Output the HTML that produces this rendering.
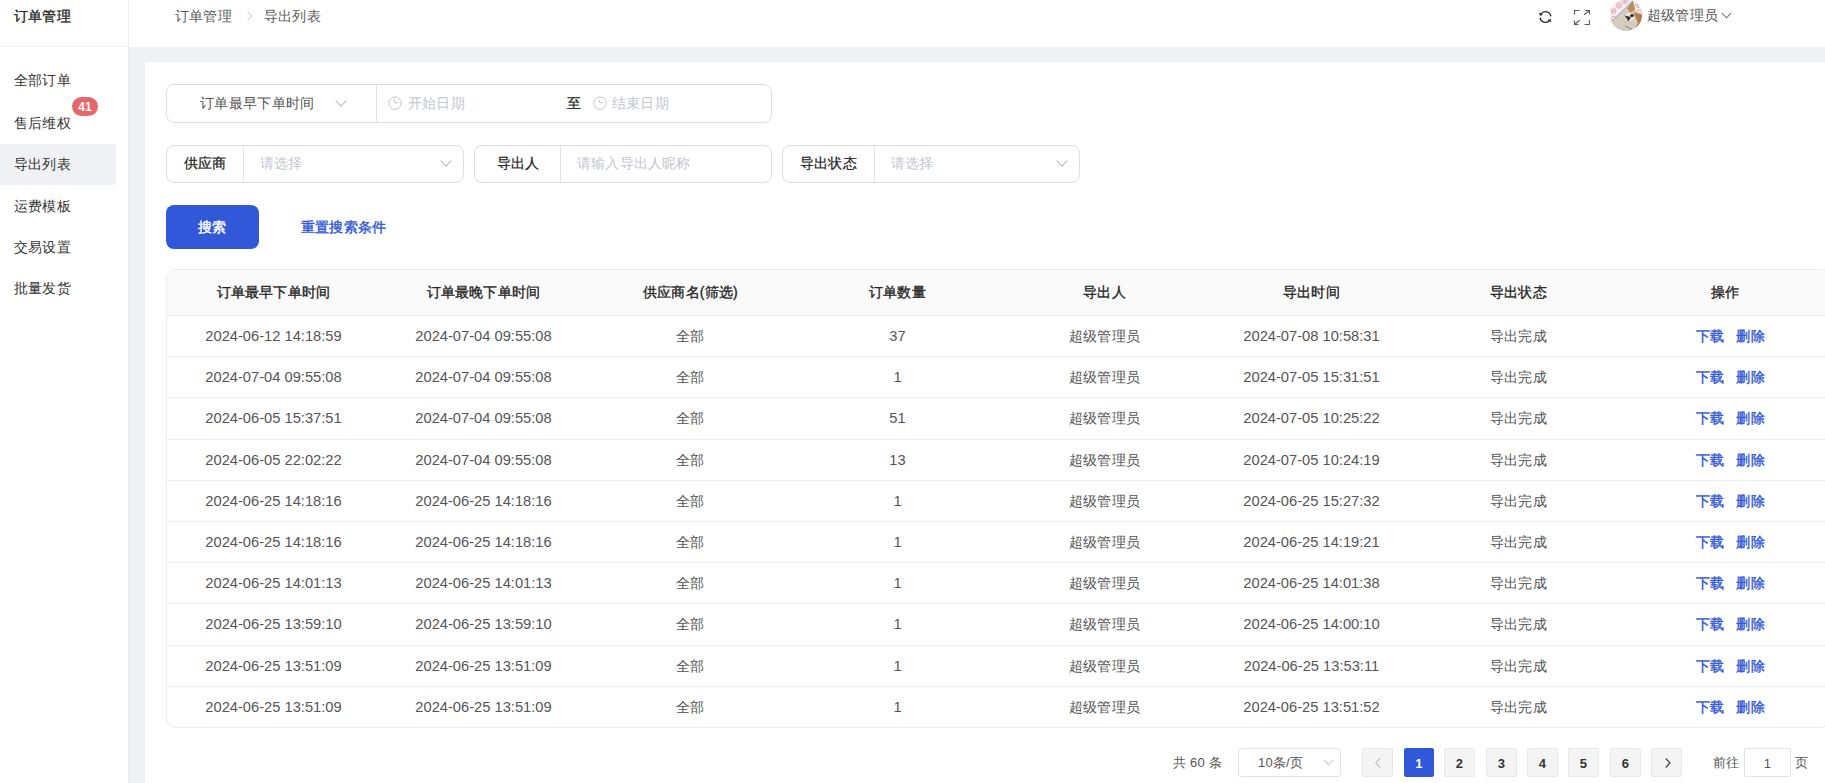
<!DOCTYPE html>
<html><head><meta charset="utf-8">
<style>
*{box-sizing:border-box;margin:0;padding:0}
html,body{width:1825px;height:783px;overflow:hidden}
body{position:relative;background:#f0f1f5;font-family:"Liberation Sans",sans-serif;font-size:14px;color:#333;letter-spacing:0.2px}
.abs{position:absolute}
#side{left:0;top:0;width:129px;height:783px;background:#fff;border-right:1px solid #eeeff3}
#side .ttl{position:absolute;left:0;top:0;width:128px;height:47px;border-bottom:1px solid #eeeff3;font-weight:400;-webkit-text-stroke:0.3px #222;color:#222;padding-left:14px;line-height:32px}
#side .mi{position:absolute;left:0;width:116px;height:41px;line-height:41px;padding-left:14px;color:#333}
#side .mi.act{background:#f0f1f4;border-radius:0 3px 3px 0}
.badge{position:absolute;left:72px;top:97px;width:26px;height:19px;border-radius:10px;background:#e6676a;color:#fff;font-size:12px;font-weight:bold;text-align:center;line-height:21px;letter-spacing:0}
#hdr{left:129px;top:0;width:1696px;height:47px;background:#fff}
.bc{position:absolute;top:0;line-height:32px;color:#5c5c5c}
#card{left:145px;top:62px;width:1700px;height:760px;background:#fff;border-radius:2px}
.grp{position:absolute;border:1px solid #dddde6;border-radius:8px;height:38px;background:#fff}
.grp .div{position:absolute;top:0;bottom:0;width:1px;background:#e2e2ea}
.t{position:absolute;white-space:nowrap;line-height:16px}
.ph{color:#c4c6d1}
.lbl{color:#1f1f1f;-webkit-text-stroke:0.25px #1f1f1f}
.chev{position:absolute;width:8px;height:8px;border-right:1px solid #b8b8c4;border-bottom:1px solid #b8b8c4;transform:rotate(45deg)}
.btn{left:166px;top:205px;width:93px;height:44px;background:#3158d8;border-radius:8px;color:#fff;font-weight:400;-webkit-text-stroke:0.4px #fff;text-align:center;line-height:44px}
.link{color:#3158d8;font-weight:400;-webkit-text-stroke:0.4px #3158d8}
table{position:absolute;left:166px;top:269px;width:1664px;table-layout:fixed;border-collapse:separate;border-spacing:0;border:1px solid #ebebf0;border-radius:10px;overflow:hidden}
th{height:46px;background:#fafafa;font-weight:bold;color:#262626;border-bottom:1px solid #ebebf0;text-align:center;padding:0}
td{height:41.2px;border-bottom:1px solid #ebebf0;color:#555;text-align:center;padding:0}
tr:last-child td{border-bottom:none;height:40.4px}
td.d{font-size:14.7px;letter-spacing:0}
td.op{text-align:left;padding-left:74px}
td:not(.d){padding-top:2px}
th{font-weight:400;-webkit-text-stroke:0.35px #262626}
.pg{position:absolute;overflow:hidden;top:748px;height:29px;width:31px;background:#f4f4f5;border:1px solid #e8e8ec;border-radius:2px;text-align:center;line-height:29px;font-weight:bold;font-size:13px;color:#333}
.pg.on{background:#3158d8;border-color:#3158d8;color:#fff}
</style></head><body>
<div id="side" class="abs">
  <div class="ttl">订单管理</div>
  <div class="mi" style="top:60px">全部订单</div>
  <div class="mi" style="top:103px">售后维权</div>
  <div class="badge">41</div>
  <div class="mi act" style="top:144px">导出列表</div>
  <div class="mi" style="top:186px">运费模板</div>
  <div class="mi" style="top:227px">交易设置</div>
  <div class="mi" style="top:268px">批量发货</div>
</div>
<div id="hdr" class="abs">
  <div class="bc" style="left:46px">订单管理</div>
  <svg class="abs" style="left:117px;top:10px" width="8" height="12" viewBox="0 0 8 12" fill="none" stroke="#c4c4cc" stroke-width="1"><path d="M1.5 1.5 L6 6 L1.5 10.5"/></svg>
  <div class="bc" style="left:135px">导出列表</div>
  <svg class="abs" style="left:1410px;top:10px" width="14" height="14" viewBox="0 0 14 14" fill="none" stroke="#2a2a2a" stroke-width="1.25">
    <path d="M1.9 4.3 A5.5 5.5 0 0 1 11.95 6.3"/><path d="M3.4 4.6 L0.6 3.0 L1.1 5.5 Z" fill="#2a2a2a" stroke-width="0.6"/>
    <path d="M1.0 7.6 A5.5 5.5 0 0 0 10.6 10.5"/><path d="M9.2 9.9 L11.7 11.9 L11.6 9.4 Z" fill="#2a2a2a" stroke-width="0.6"/>
  </svg>
  <svg class="abs" style="left:1444px;top:9px" width="17" height="17" viewBox="0 0 17 17" fill="none" stroke="#5c5c5c" stroke-width="1.2">
    <path d="M1.5 5.5 V1.5 H6.5"/><path d="M12 1.5 H16.5 V5.5"/><path d="M11 5.8 L16.2 1.8"/>
    <path d="M1.5 11.5 V15.5 H5.5"/><path d="M6.8 11.2 L1.8 15.2"/><path d="M16.5 11 V15.5 H11.5"/>
  </svg>
  <div class="abs" style="left:1481px;top:-1px;width:32px;height:32px;border-radius:50%;overflow:hidden;background:#f4ecee">
    <svg width="32" height="32" viewBox="0 0 32 32">
      <g fill="none" stroke="#dba3a6" stroke-width="0.9">
        <circle cx="3.5" cy="12" r="2.4"/><circle cx="9" cy="6.5" r="2.6"/><circle cx="15" cy="2" r="2.4"/>
        <circle cx="4" cy="19.5" r="2.2"/><circle cx="28" cy="6" r="2.4"/><circle cx="29.5" cy="13" r="2.2"/>
      </g>
      <g fill="#e58a90"><circle cx="3.5" cy="12" r="0.9"/><circle cx="9" cy="6.5" r="1"/><circle cx="15" cy="2" r="0.9"/><circle cx="28" cy="6" r="0.9"/></g>
      <path d="M1 23 L23 1.5 L25 11 L32 16 L32 32 L0 32 Z" fill="#d5ccbe"/>
      <path d="M1 23 L23 1.5" stroke="#6a7fc0" stroke-width="0.6"/>
      <path d="M17 9.5 L23 1.5 L25 10.5 L20.5 14 Z" fill="#bb8d63"/>
      <path d="M23.5 13.5 L32 15.5 L32 32 L24 32 L28 24 Z" fill="#b27c4b"/>
      <ellipse cx="19.5" cy="18" rx="4.8" ry="4.2" fill="#ece6dc"/>
      <path d="M14.5 16.5 L21 18 L18.5 22.5 Z" fill="#3e342e"/>
      <ellipse cx="22" cy="16.5" rx="1.7" ry="1.5" fill="#1e1a18"/>
      <path d="M15 27 L22 30.5" stroke="#6a6058" stroke-width="0.7"/>
    </svg>
  </div>
  <div class="bc" style="left:1518px;top:-1px;color:#555">超级管理员</div>
  <div class="chev" style="left:1594px;top:10px;width:7px;height:7px;border-color:#777"></div>
</div>
<div id="card" class="abs"></div>

<!-- filter row 1 -->
<div class="grp" style="left:166px;top:84px;width:606px;height:39px">
  <div class="t" style="left:33px;top:10px;color:#555;letter-spacing:0.35px">订单最早下单时间</div>
  <div class="chev" style="left:170px;top:12px"></div>
  <div class="div" style="left:209px"></div>
  <svg class="abs" style="left:221px;top:11px" width="14" height="14" viewBox="0 0 14 14" fill="none" stroke="#c6c8d3" stroke-width="1"><circle cx="7" cy="7.2" r="6.2"/><path d="M6.6 3.4 V6.6 H10.2"/></svg>
  <div class="t ph" style="left:241px;top:10px">开始日期</div>
  <div class="t lbl" style="left:400px;top:10px">至</div>
  <svg class="abs" style="left:426px;top:11px" width="14" height="14" viewBox="0 0 14 14" fill="none" stroke="#c6c8d3" stroke-width="1"><circle cx="7" cy="7.2" r="6.2"/><path d="M6.6 3.4 V6.6 H10.2"/></svg>
  <div class="t ph" style="left:445px;top:10px">结束日期</div>
</div>
<!-- filter row 2 -->
<div class="grp" style="left:166px;top:145px;width:298px">
  <div class="t lbl" style="left:17px;top:9px">供应商</div>
  <div class="div" style="left:76px"></div>
  <div class="t ph" style="left:93px;top:9px">请选择</div>
  <div class="chev" style="left:275px;top:11px"></div>
</div>
<div class="grp" style="left:474px;top:145px;width:298px">
  <div class="t lbl" style="left:22px;top:9px">导出人</div>
  <div class="div" style="left:85px"></div>
  <div class="t ph" style="left:102px;top:9px">请输入导出人昵称</div>
</div>
<div class="grp" style="left:782px;top:145px;width:298px">
  <div class="t lbl" style="left:17px;top:9px">导出状态</div>
  <div class="div" style="left:91px"></div>
  <div class="t ph" style="left:108px;top:9px">请选择</div>
  <div class="chev" style="left:275px;top:11px"></div>
</div>

<div class="abs btn">搜索</div>
<div class="abs link" style="left:301px;top:218px;line-height:18px">重置搜索条件</div>

<table>
<colgroup><col style="width:213px"><col style="width:207px"><col style="width:207px"><col style="width:207px"><col style="width:207px"><col style="width:207px"><col style="width:207px"><col style="width:207px"></colgroup>
<thead><tr><th>订单最早下单时间</th><th>订单最晚下单时间</th><th>供应商名(筛选)</th><th>订单数量</th><th>导出人</th><th>导出时间</th><th>导出状态</th><th>操作</th></tr></thead>
<tbody>
<tr><td class="d">2024-06-12 14:18:59</td><td class="d">2024-07-04 09:55:08</td><td>全部</td><td class="d">37</td><td>超级管理员</td><td class="d">2024-07-08 10:58:31</td><td>导出完成</td><td class="op"><span class="link">下载</span><span class="link" style="margin-left:12px">删除</span></td></tr>
<tr><td class="d">2024-07-04 09:55:08</td><td class="d">2024-07-04 09:55:08</td><td>全部</td><td class="d">1</td><td>超级管理员</td><td class="d">2024-07-05 15:31:51</td><td>导出完成</td><td class="op"><span class="link">下载</span><span class="link" style="margin-left:12px">删除</span></td></tr>
<tr><td class="d">2024-06-05 15:37:51</td><td class="d">2024-07-04 09:55:08</td><td>全部</td><td class="d">51</td><td>超级管理员</td><td class="d">2024-07-05 10:25:22</td><td>导出完成</td><td class="op"><span class="link">下载</span><span class="link" style="margin-left:12px">删除</span></td></tr>
<tr><td class="d">2024-06-05 22:02:22</td><td class="d">2024-07-04 09:55:08</td><td>全部</td><td class="d">13</td><td>超级管理员</td><td class="d">2024-07-05 10:24:19</td><td>导出完成</td><td class="op"><span class="link">下载</span><span class="link" style="margin-left:12px">删除</span></td></tr>
<tr><td class="d">2024-06-25 14:18:16</td><td class="d">2024-06-25 14:18:16</td><td>全部</td><td class="d">1</td><td>超级管理员</td><td class="d">2024-06-25 15:27:32</td><td>导出完成</td><td class="op"><span class="link">下载</span><span class="link" style="margin-left:12px">删除</span></td></tr>
<tr><td class="d">2024-06-25 14:18:16</td><td class="d">2024-06-25 14:18:16</td><td>全部</td><td class="d">1</td><td>超级管理员</td><td class="d">2024-06-25 14:19:21</td><td>导出完成</td><td class="op"><span class="link">下载</span><span class="link" style="margin-left:12px">删除</span></td></tr>
<tr><td class="d">2024-06-25 14:01:13</td><td class="d">2024-06-25 14:01:13</td><td>全部</td><td class="d">1</td><td>超级管理员</td><td class="d">2024-06-25 14:01:38</td><td>导出完成</td><td class="op"><span class="link">下载</span><span class="link" style="margin-left:12px">删除</span></td></tr>
<tr><td class="d">2024-06-25 13:59:10</td><td class="d">2024-06-25 13:59:10</td><td>全部</td><td class="d">1</td><td>超级管理员</td><td class="d">2024-06-25 14:00:10</td><td>导出完成</td><td class="op"><span class="link">下载</span><span class="link" style="margin-left:12px">删除</span></td></tr>
<tr><td class="d">2024-06-25 13:51:09</td><td class="d">2024-06-25 13:51:09</td><td>全部</td><td class="d">1</td><td>超级管理员</td><td class="d">2024-06-25 13:53:11</td><td>导出完成</td><td class="op"><span class="link">下载</span><span class="link" style="margin-left:12px">删除</span></td></tr>
<tr><td class="d">2024-06-25 13:51:09</td><td class="d">2024-06-25 13:51:09</td><td>全部</td><td class="d">1</td><td>超级管理员</td><td class="d">2024-06-25 13:51:52</td><td>导出完成</td><td class="op"><span class="link">下载</span><span class="link" style="margin-left:12px">删除</span></td></tr>
</tbody>
</table>

<!-- pagination -->
<div class="t" style="left:1173px;top:755px;font-size:13px;color:#555">共 60 条</div>
<div class="abs" style="left:1238px;top:748px;width:103px;height:29px;border:1px solid #e2e2ea;border-radius:3px;background:#fff">
  <div class="t" style="left:19px;top:6px;font-size:13px;color:#555">10条/页</div>
  <div class="chev" style="left:86px;top:8px;width:7px;height:7px;border-color:#c8c8d0"></div>
</div>
<div class="pg" style="left:1362px"><svg style="position:absolute;left:11px;top:8px" width="8" height="12" viewBox="0 0 8 12" fill="none" stroke="#c0c4cc" stroke-width="1.2"><path d="M6 1.5 L1.8 6 L6 10.5"/></svg></div>
<div class="pg on" style="left:1404px;width:30px">1</div>
<div class="pg" style="left:1444px">2</div>
<div class="pg" style="left:1486px">3</div>
<div class="pg" style="left:1527px">4</div>
<div class="pg" style="left:1568px">5</div>
<div class="pg" style="left:1610px">6</div>
<div class="pg" style="left:1651px"><svg style="position:absolute;left:12px;top:8px" width="8" height="12" viewBox="0 0 8 12" fill="none" stroke="#444" stroke-width="1.2"><path d="M1.8 1.5 L6 6 L1.8 10.5"/></svg></div>
<div class="t" style="left:1713px;top:755px;font-size:13px;color:#555">前往</div>
<div class="abs" style="left:1744px;top:748px;width:47px;height:29px;border:1px solid #e2e2ea;border-radius:2px;background:#fff;text-align:center;line-height:29px;font-size:13px;color:#555">1</div>
<div class="t" style="left:1795px;top:755px;font-size:13px;color:#555">页</div>
</body></html>
